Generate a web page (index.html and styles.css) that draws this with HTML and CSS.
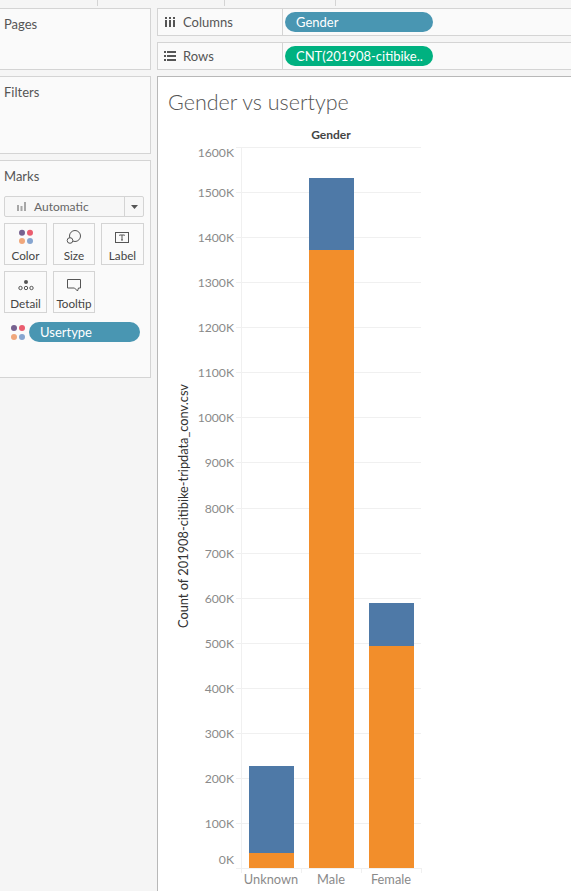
FILE: index.html
```html
<!DOCTYPE html>
<html>
<head>
    <title>Gender vs usertype</title>
    <link rel="stylesheet" href="styles.css">
</head>
<body>
    <div class="topstrip">
        <span class="tab tab-a"></span>
        <span class="tab tab-b"></span>
        <span class="tab tab-c"></span>
    </div>

    <div class="workspace">
        <div class="side">
            <section class="card pages"><h2>Pages</h2></section>
            <section class="card filters"><h2>Filters</h2></section>
            <section class="card marks">
                <h2>Marks</h2>
                <div class="select">
                    <svg class="select-icon" width="9" height="9" viewBox="0 0 9 9"><path d="M0 3h2v6H0zM3.500 4h2v5h-2zM7 0h2v9H7z" fill="#a6a6a6"/></svg>
                    <span class="select-text">Automatic</span>
                    <span class="select-arrow"><svg width="7" height="4" viewBox="0 0 7 4"><path d="M0 0h7L3.500 4z" fill="#555"/></svg></span>
                </div>
                <div class="mark-grid">
                    <div class="mark-btn">
                        <svg width="16" height="16" viewBox="0 0 16 16"><circle cx="4" cy="3.700" r="3" fill="#76618f"/><circle cx="12" cy="3.700" r="3" fill="#ea5d6f"/><circle cx="4" cy="12" r="3" fill="#f0a77b"/><circle cx="12" cy="12" r="3" fill="#86a5d0"/></svg>
                        <span>Color</span>
                    </div>
                    <div class="mark-btn">
                        <svg width="16" height="16" viewBox="0 0 16 16" fill="#fafafa" stroke="#555"><circle cx="9" cy="7" r="5.500"/><circle cx="4" cy="11.500" r="2.800"/></svg>
                        <span>Size</span>
                    </div>
                    <div class="mark-btn">
                        <svg width="16" height="16" viewBox="0 0 16 16"><rect x="0.500" y="3.500" width="13" height="10" fill="none" stroke="#555"/><path d="M4.500 6.500V6h5v.5M7 6v5M6 11h2" fill="none" stroke="#555"/></svg>
                        <span>Label</span>
                    </div>
                    <div class="mark-btn">
                        <svg width="16" height="16" viewBox="0 0 16 16"><circle cx="8" cy="5" r="2" fill="#555"/><g fill="none" stroke="#555"><circle cx="2.500" cy="11" r="1.700"/><circle cx="8" cy="11" r="1.700"/><circle cx="13.500" cy="11" r="1.700"/></g></svg>
                        <span>Detail</span>
                    </div>
                    <div class="mark-btn">
                        <svg width="16" height="16" viewBox="0 0 16 16"><path d="M1.500 2.500h13v8.500h-2l-1 3-3-3h-7z" fill="none" stroke="#555"/></svg>
                        <span>Tooltip</span>
                    </div>
                </div>
                <div class="mark-field">
                    <svg width="14" height="15" viewBox="0 0 14 15"><circle cx="3" cy="3" r="3" fill="#76618f"/><circle cx="11" cy="3" r="3" fill="#ea5d6f"/><circle cx="3" cy="12" r="3" fill="#f0a77b"/><circle cx="11" cy="12" r="3" fill="#86a5d0"/></svg>
                    <span class="pill pill-blue">Usertype</span>
                </div>
            </section>
        </div>

        <div class="main">
            <div class="shelf">
                <div class="shelf-name">
                    <svg width="11" height="10" viewBox="0 0 11 10"><path d="M0 0h2v2H0zM0 3h2v7H0zM4 0h2v2H4zM4 3h2v7H4zM8 0h2v2H8zM8 3h2v7H8z" fill="#555"/></svg>
                    <span>Columns</span>
                </div>
                <div class="shelf-body"><span class="pill pill-blue">Gender</span></div>
            </div>
            <div class="shelf">
                <div class="shelf-name rows-name">
                    <svg width="12" height="10" viewBox="0 0 12 10"><path d="M0 0h2v2H0zM3 0h9v2H3zM0 4h2v2H0zM3 4h9v2H3zM0 8h2v2H0zM3 8h9v2H3z" fill="#555"/></svg>
                    <span>Rows</span>
                </div>
                <div class="shelf-body"><span class="pill pill-green">CNT(201908-citibike..</span></div>
            </div>

            <div class="canvas">
                <h1>Gender vs usertype</h1>
                <svg class="chart" width="414" height="776" viewBox="158 115 414 776">
                    <g class="grid">
                        <path d="M236 147.500H421M236 192.500H421M236 237.500H421M236 282.500H421M236 327.500H421M236 372.500H421M236 417.500H421M236 462.500H421M236 508.500H421M236 553.500H421M236 598.500H421M236 643.500H421M236 688.500H421M236 733.500H421M236 778.500H421M236 823.500H421M236 868.500H421"/>
                        <path d="M241.500 147V873M301.500 868V873M361.500 868V873M421.500 868V873"/>
                    </g>

                    <rect class="blue" x="249" y="766" width="45" height="102"/>
                    <rect class="orange" x="249" y="853" width="45" height="15"/>
                    <rect class="blue" x="309" y="178" width="45" height="690"/>
                    <rect class="orange" x="309" y="250" width="45" height="618"/>
                    <rect class="blue" x="369" y="603" width="45" height="265"/>
                    <rect class="orange" x="369" y="646" width="45" height="222"/>

                    <text class="header" x="331" y="138.500">Gender</text>
                    <text class="measure" transform="translate(188 628) rotate(-90)">Count of 201908-citibike-tripdata_conv.csv</text>

                    <g class="ticks">
                        <text x="234" y="157">1600K</text>
                        <text x="234" y="196.500">1500K</text>
                        <text x="234" y="241.500">1400K</text>
                        <text x="234" y="286.500">1300K</text>
                        <text x="234" y="331.500">1200K</text>
                        <text x="234" y="376.500">1100K</text>
                        <text x="234" y="421.500">1000K</text>
                        <text x="234" y="466.500">900K</text>
                        <text x="234" y="512.500">800K</text>
                        <text x="234" y="557.500">700K</text>
                        <text x="234" y="602.500">600K</text>
                        <text x="234" y="647.500">500K</text>
                        <text x="234" y="692.500">400K</text>
                        <text x="234" y="737.500">300K</text>
                        <text x="234" y="782.500">200K</text>
                        <text x="234" y="827.500">100K</text>
                        <text x="234" y="863.500">0K</text>
                    </g>

                    <g class="cats">
                        <text x="271" y="884">Unknown</text>
                        <text x="331" y="884">Male</text>
                        <text x="391" y="884">Female</text>
                    </g>
                </svg>
            </div>
        </div>
    </div>
</body>
</html>
```

FILE: styles.css
```css
html, body {
    margin: 0;
    padding: 0;
}

body {
    width: 571px;
    height: 891px;
    overflow: hidden;
    background: #f5f5f5;
    font-family: Lato, "Open Sans", sans-serif;
    color: #555;
}

.topstrip {
    display: flex;
    height: 6px;
    padding-bottom: 2px;
}

.tab {
    border-right: 1px solid #d4d4d4;
    display: block;
}

.tab-a { width: 97px; }
.tab-b { width: 126px; }
.tab-c { width: 110px; }

.workspace {
    display: flex;
    gap: 6px;
    height: 883px;
}

.side {
    width: 151px;
    display: flex;
    flex-direction: column;
    gap: 6px;
    flex-shrink: 0;
}

.card {
    background: #fafafa;
    border: 1px solid #d4d4d4;
    border-left: none;
    box-sizing: border-box;
}

.card h2 {
    margin: 0;
    font-size: 13px;
    font-weight: 400;
    color: #555;
    padding: 7px 0 0 4px;
    line-height: 16px;
}

.pages { height: 62px; }
.filters { height: 78px; }
.marks { height: 218px; padding-right: 6px; }

.select {
    display: flex;
    align-items: center;
    box-sizing: border-box;
    height: 21px;
    margin: 12px 0 0 4px;
    border: 1px solid #d4d4d4;
    border-radius: 2px;
    background: #f7f7f7;
}

.select-icon { margin-left: 12px; }

.select-text {
    flex: 1;
    margin-left: 8px;
    font-size: 12px;
    color: #666;
}

.select-arrow {
    width: 18px;
    height: 100%;
    border-left: 1px solid #d4d4d4;
    display: flex;
    align-items: center;
    justify-content: center;
}

.mark-grid {
    display: grid;
    grid-template-columns: 43px 42px 43px;
    gap: 6px 6px;
    margin: 6px 0 0 4px;
}

.mark-btn {
    height: 42px;
    box-sizing: border-box;
    border: 1px solid #d4d4d4;
    display: flex;
    flex-direction: column;
    align-items: center;
    padding-top: 5px;
    font-size: 11.700px;
    line-height: 15px;
    color: #444;
}

.mark-btn svg {
    height: 16px;
    margin-bottom: 3px;
}

.mark-field {
    display: flex;
    align-items: center;
    gap: 4px;
    margin: 9px 0 0 11px;
}

.pill {
    display: block;
    box-sizing: border-box;
    height: 20px;
    line-height: 20px;
    border-radius: 10px;
    color: #fff;
    font-size: 13px;
    padding-left: 11px;
    white-space: nowrap;
}

.pill-blue { background: #4996b2; }
.pill-green { background: #00b180; }

.mark-field .pill { width: 111px; }

.main {
    flex: 1;
    display: flex;
    flex-direction: column;
    gap: 6px;
    min-width: 0;
}

.shelf {
    display: flex;
    flex-shrink: 0;
    height: 28px;
    box-sizing: border-box;
    border: 1px solid #d4d4d4;
    border-right: none;
    background: #fafafa;
}

.shelf-name {
    width: 125px;
    box-sizing: border-box;
    border-right: 1px solid #d4d4d4;
    display: flex;
    align-items: center;
    gap: 7px;
    padding-left: 7px;
    font-size: 13px;
    color: #555;
}

.rows-name { padding-left: 6px; }

.shelf-body {
    flex: 1;
    padding: 3px 0 0 2px;
}

.shelf-body .pill { width: 148px; }

.canvas {
    flex: 1;
    min-height: 0;
    background: #fff;
    border-top: 1px solid #b8b8b8;
    border-left: 1px solid #b8b8b8;
}

.canvas h1 {
    margin: 0;
    padding: 13px 0 1px 10px;
    font-size: 21.500px;
    line-height: 24px;
    font-weight: 300;
    color: #555;
    white-space: nowrap;
}

.chart {
    display: block;
}

.grid path {
    fill: none;
    stroke: #f0f0f0;
    stroke-width: 1;
}

.blue { fill: #4e79a7; }
.orange { fill: #f28e2b; }

.header {
    font-size: 12px;
    font-weight: 700;
    fill: #444;
    text-anchor: middle;
}

.measure {
    font-size: 12.800px;
    fill: #333;
}

.ticks text {
    font-size: 12.200px;
    fill: #8a8a8a;
    text-anchor: end;
}

.cats text {
    font-size: 12.800px;
    fill: #8a8a8a;
    text-anchor: middle;
}
```
